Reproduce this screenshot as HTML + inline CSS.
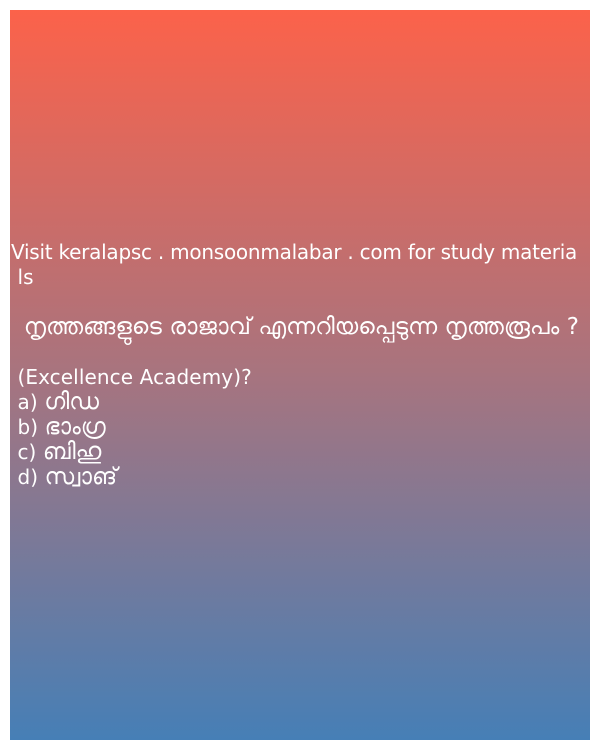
<!DOCTYPE html>
<html><head><meta charset="utf-8"><style>
html,body{margin:0;padding:0;background:#fff;width:600px;height:750px;overflow:hidden}
.box{position:absolute;left:10px;top:10px;width:580px;height:730px;background:linear-gradient(to bottom,#fc624a 0%,#a7747f 50%,#467fb6 100%)}
.t{position:absolute;left:1px;top:230px;color:#fff;font-family:"DejaVu Sans","Noto Sans CJK SC",sans-serif;font-size:20px;line-height:25px;white-space:pre;letter-spacing:0.1px}
.m{font-size:23px}
.f{letter-spacing:-0.25px}
</style></head><body>
<div class="box"><div class="t"><span class="f">Visit keralapsc . monsoonmalabar . com for study materia</span>
 ls

  <span class="m">നൃത്തങ്ങളുടെ രാജാവ് എന്നറിയപ്പെടുന്ന നൃത്തരൂപം ?</span>

 (Excellence Academy)?
 a) <span class="m">ഗിഡ</span>
 b) <span class="m">ഭാംഗ്ര</span>
 c) <span class="m">ബിഹു</span>
 d) <span class="m">സ്വാങ്</span></div></div>
</body></html>
